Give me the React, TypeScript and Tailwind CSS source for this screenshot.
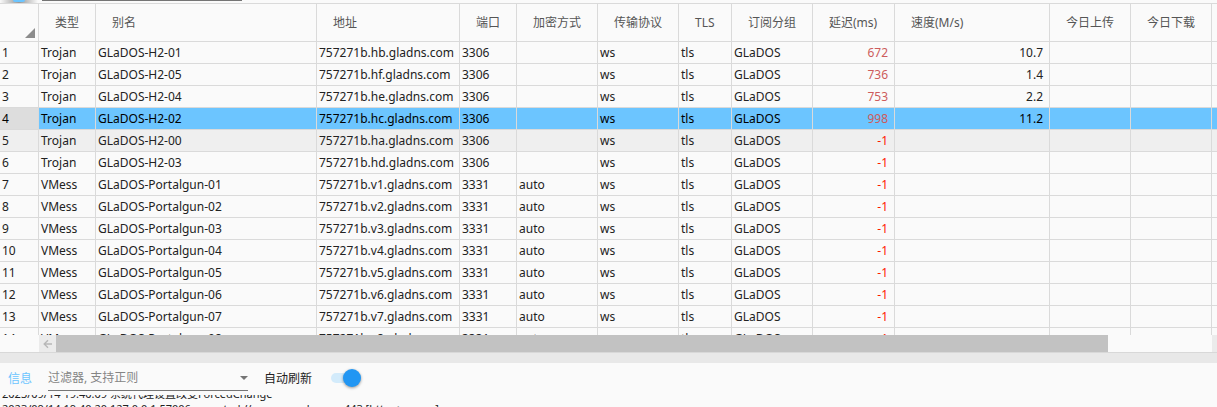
import { useState } from "react";

type Server = {
  type: string;
  alias: string;
  address: string;
  port: string;
  cipher: string;
  delay: string;
  speed: string;
};

const trojan = (alias: string, host: string, delay: string, speed: string): Server => ({
  type: "Trojan",
  alias: `GLaDOS-H2-${alias}`,
  address: `757271b.${host}.gladns.com`,
  port: "3306",
  cipher: "",
  delay,
  speed,
});

const vmess = (n: number): Server => ({
  type: "VMess",
  alias: `GLaDOS-Portalgun-0${n}`,
  address: `757271b.v${n}.gladns.com`,
  port: "3331",
  cipher: "auto",
  delay: "-1",
  speed: "",
});

const servers: Server[] = [
  trojan("01", "hb", "672", "10.7"),
  trojan("05", "hf", "736", "1.4"),
  trojan("04", "he", "753", "2.2"),
  trojan("02", "hc", "998", "11.2"),
  trojan("00", "ha", "-1", ""),
  trojan("03", "hd", "-1", ""),
  ...[1, 2, 3, 4, 5, 6, 7, 8].map(vmess),
];

const columns = [
  { title: "类型", width: "w-[57px]" },
  { title: "别名", width: "w-[221px]" },
  { title: "地址", width: "w-[143px]" },
  { title: "端口", width: "w-[57px]" },
  { title: "加密方式", width: "w-[81px]" },
  { title: "传输协议", width: "w-[81px]" },
  { title: "TLS", width: "w-[53px]" },
  { title: "订阅分组", width: "w-[81px]" },
  { title: "延迟(ms)", width: "w-[82px]" },
  { title: "速度(M/s)", width: "w-[155px]" },
  { title: "今日上传", width: "w-[81px]" },
  { title: "今日下载", width: "w-[81px]" },
];

const cell = "h-[22px] border-r border-b border-[#dadada] p-0 pl-0.5 text-left font-normal leading-[21px]";
const numeric = "h-[22px] border-r border-b border-[#dadada] p-0 pr-1.5 text-right leading-[21px]";

function rowColor(index: number, selected: number) {
  if (index === selected) return "bg-[#6cc5ff] text-black";
  if (index === 4) return "bg-[#efefef]";
  return "";
}

function ServerTable() {
  const [selected, setSelected] = useState(3);
  return (
    <div className="min-h-0 flex-1 overflow-hidden border-t border-[#dadada]">
      <table className="w-full table-fixed border-separate border-spacing-0 whitespace-nowrap">
        <thead>
          <tr className="h-[38px] text-xs text-[#555]">
            <th className="w-[39px] border-r border-b border-[#dadada] p-0 pr-[3px] pb-[3px] align-bottom">
              <svg className="ml-auto block size-2.5" viewBox="0 0 10 10" aria-hidden="true">
                <path d="M10 0V10H0Z" fill="#8c8c8c" />
              </svg>
            </th>
            {columns.map((c) => (
              <th key={c.title} className={`${c.width} border-r border-b border-[#dadada] p-0 pl-4 text-left font-normal`}>
                {c.title}
              </th>
            ))}
            <th className="border-b border-[#dadada] p-0" />
          </tr>
        </thead>
        <tbody>
          {servers.map((s, i) => (
            <tr key={s.alias} className={rowColor(i, selected)} onClick={() => setSelected(i)}>
              <th scope="row" className={`${cell} ${i === selected ? "bg-[#dddddd]" : ""}`}>
                {i + 1}
              </th>
              <td className={cell}>{s.type}</td>
              <td className={cell}>{s.alias}</td>
              <td className={cell}>{s.address}</td>
              <td className={cell}>{s.port}</td>
              <td className={cell}>{s.cipher}</td>
              <td className={cell}>ws</td>
              <td className={cell}>tls</td>
              <td className={cell}>GLaDOS</td>
              <td className={`${numeric} ${s.delay === "-1" ? "text-[#ff1a00]" : "text-[#cd5c5c]"}`}>{s.delay}</td>
              <td className={numeric}>{s.speed}</td>
              <td className={cell} />
              <td className={cell} />
              <td className="border-b border-[#dadada] p-0" />
            </tr>
          ))}
        </tbody>
      </table>
    </div>
  );
}

function ScrollBar() {
  return (
    <div className="flex h-[18px] shrink-0 border-b border-[#d8d8d8] pl-[39px]">
      <button type="button" aria-label="向左滚动" className="flex w-[17px] items-center justify-center bg-[#ebebeb]">
        <svg className="size-2.5" viewBox="0 0 10 10" fill="none" stroke="#b8b8b8" strokeWidth="1.4" aria-hidden="true">
          <path d="M9 5H1.5M5 1.2L1.2 5L5 8.8" />
        </svg>
      </button>
      <div className="flex flex-1 pr-26">
        <div className="flex-1 bg-[#c2c2c2]" />
      </div>
      <div className="w-[5px] bg-[#ebebeb]" />
    </div>
  );
}

function LogPanel() {
  const [auto, setAuto] = useState(true);
  return (
    <section className="h-11 shrink-0 overflow-hidden">
      <div className="flex h-8 items-start pl-2 text-xs">
        <h2 className="w-10 pt-[7px] leading-[18px] text-[#6cc5ff]">信息</h2>
        <div className="relative w-[200px]">
          <input
            aria-label="过滤器"
            placeholder="过滤器, 支持正则"
            className="block h-7 w-full border-b border-[#757575] bg-transparent pt-0.5 pr-5 outline-none placeholder:text-[#858585]"
          />
          <svg className="absolute top-3 right-0 h-1.5 w-2" viewBox="0 0 8 6" aria-hidden="true">
            <path d="M0 1H8L4 5Z" fill="#757575" />
          </svg>
        </div>
        <label className="ml-4 flex items-start gap-[19px] pt-[7px] leading-[18px] text-[#222]">
          自动刷新
          <span className="relative flex h-4 w-[30px] items-center">
            <input type="checkbox" className="sr-only" checked={auto} onChange={(e) => setAuto(e.target.checked)} />
            <span className="h-2.5 w-full rounded-full bg-[#d3ebfb]" />
            <span
              className={`absolute size-[18px] rounded-full shadow-[0_1px_3px_rgba(0,0,0,0.4)] ${auto ? "right-0 bg-[#2196f3]" : "left-0 bg-white"}`}
            />
          </span>
        </label>
      </div>
      <div className="h-3 overflow-hidden pl-0.5 text-[11px] leading-[15px] whitespace-nowrap">
        <p className="-mt-[9px]">2023/09/14 19:40:09 系统代理设置改变ForcedChange</p>
        <p>2023/09/14 19:40:20 127.0.0.1:57006 accepted //www.google.com:443 [http -&gt; proxy]</p>
      </div>
    </section>
  );
}

export default function App() {
  return (
    <main className="flex h-screen flex-col overflow-hidden bg-[#fafafa] font-['Noto_Sans','Noto_Sans_CJK_SC',sans-serif] text-xs text-[#222]">
      <div className="flex h-[3px] shrink-0 items-start gap-1 overflow-hidden">
        <div className="flex h-[3px] w-[38px] justify-center bg-linear-to-r from-[#fafafa] via-[#999] to-[#fafafa]">
          <span className="h-0.5 w-3 rounded-b-full bg-[#6cc5ff]" />
        </div>
        <div className="h-px w-[200px] bg-[#757575]" />
      </div>
      <ServerTable />
      <ScrollBar />
      <div className="h-2.5 shrink-0 bg-[#e8e8e8]" />
      <LogPanel />
    </main>
  );
}
